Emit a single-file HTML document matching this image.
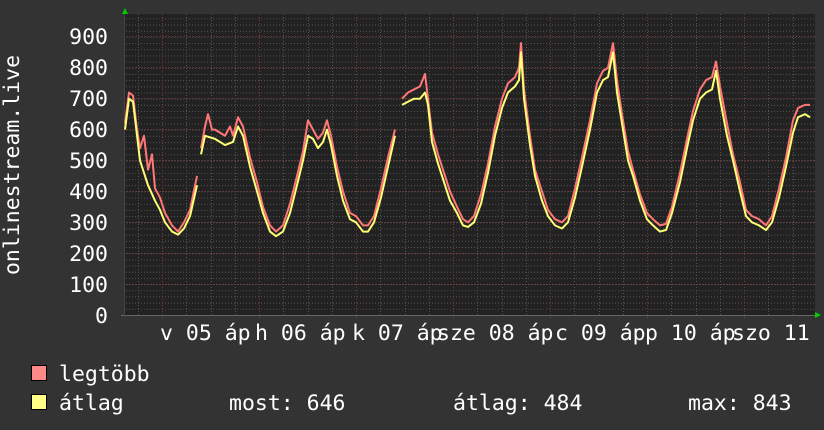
<!DOCTYPE html>
<html><head><meta charset="utf-8"><style>
html,body{margin:0;padding:0;background:#333;width:824px;height:430px;overflow:hidden}
svg{display:block}
text{font-family:"DejaVu Sans Mono","Liberation Mono",monospace;fill:#fff;font-size:21.5px}
</style></head><body>
<svg width="824" height="430" xmlns="http://www.w3.org/2000/svg">
<defs>
<pattern id="hmin" x="0" y="315" width="690" height="6.18" patternUnits="userSpaceOnUse">
<line x1="0" y1="0.5" x2="690" y2="0.5" stroke="#555" stroke-width="1" stroke-dasharray="1,2"/>
</pattern>
</defs>
<rect x="0" y="0" width="824" height="430" fill="#333"/>
<rect x="124" y="14" width="691" height="301" fill="#222"/>
<rect x="124" y="14" width="691" height="301" fill="url(#hmin)"/>
<g stroke="#555" stroke-width="1" stroke-dasharray="1,2">
<line x1="138.5" y1="14" x2="138.5" y2="315"/>
<line x1="186.5" y1="14" x2="186.5" y2="315"/><line x1="211.5" y1="14" x2="211.5" y2="315"/><line x1="235.5" y1="14" x2="235.5" y2="315"/>
<line x1="283.5" y1="14" x2="283.5" y2="315"/><line x1="308.5" y1="14" x2="308.5" y2="315"/><line x1="332.5" y1="14" x2="332.5" y2="315"/>
<line x1="380.5" y1="14" x2="380.5" y2="315"/><line x1="405.5" y1="14" x2="405.5" y2="315"/><line x1="429.5" y1="14" x2="429.5" y2="315"/>
<line x1="477.5" y1="14" x2="477.5" y2="315"/><line x1="502.5" y1="14" x2="502.5" y2="315"/><line x1="526.5" y1="14" x2="526.5" y2="315"/>
<line x1="574.5" y1="14" x2="574.5" y2="315"/><line x1="599.5" y1="14" x2="599.5" y2="315"/><line x1="623.5" y1="14" x2="623.5" y2="315"/>
<line x1="671.5" y1="14" x2="671.5" y2="315"/><line x1="696.5" y1="14" x2="696.5" y2="315"/><line x1="720.5" y1="14" x2="720.5" y2="315"/>
<line x1="768.5" y1="14" x2="768.5" y2="315"/><line x1="793.5" y1="14" x2="793.5" y2="315"/>
</g>
<g stroke="#7a3a3a" stroke-width="1" stroke-dasharray="1,2">
<line x1="162.5" y1="14" x2="162.5" y2="318"/><line x1="259.5" y1="14" x2="259.5" y2="318"/><line x1="356.5" y1="14" x2="356.5" y2="318"/>
<line x1="453.5" y1="14" x2="453.5" y2="318"/><line x1="550.5" y1="14" x2="550.5" y2="318"/><line x1="647.5" y1="14" x2="647.5" y2="318"/><line x1="744.5" y1="14" x2="744.5" y2="318"/>
<line x1="121" y1="36.5" x2="815" y2="36.5"/><line x1="121" y1="67.5" x2="815" y2="67.5"/><line x1="121" y1="98.5" x2="815" y2="98.5"/>
<line x1="121" y1="129.5" x2="815" y2="129.5"/><line x1="121" y1="160.5" x2="815" y2="160.5"/><line x1="121" y1="191.5" x2="815" y2="191.5"/>
<line x1="121" y1="222.5" x2="815" y2="222.5"/><line x1="121" y1="253.5" x2="815" y2="253.5"/><line x1="121" y1="284.5" x2="815" y2="284.5"/>
</g>
<line x1="121" y1="315.5" x2="818" y2="315.5" stroke="#666"/>
<line x1="124.5" y1="12" x2="124.5" y2="318" stroke="#444"/>
<polygon points="122,14 128,14 125,8" fill="#0c0"/>
<polygon points="815,312 815,318 821,315" fill="#0c0"/>
<g transform="translate(0,315) scale(1,-0.309)" fill="none" stroke-linejoin="round">
<g stroke="#f77" stroke-width="2">
<polyline vector-effect="non-scaling-stroke" points="125,620 129,720 133,710 137,600 140,540 144,580 148,470 152,520 155,410 160,380 165,330 172,290 178,270 184,300 190,340 197,450"/>
<polyline vector-effect="non-scaling-stroke" points="201,540 205,610 208,650 212,600 215,600 225,580 230,610 233,580 238,640 243,610 250,510 257,430 263,350 270,290 276,270 283,290 290,360 297,450 303,530 308,630 313,600 318,570 323,590 327,630 331,580 337,480 343,400 350,330 356,320 363,290 368,290 374,320 381,410 388,510 395,600"/>
<polyline vector-effect="non-scaling-stroke" points="402,700 408,720 414,730 420,740 425,780 428,700 432,590 438,520 444,460 450,400 457,350 463,310 468,300 474,320 481,390 488,490 495,610 502,700 508,750 515,770 519,800 521,880 524,730 530,580 535,470 542,400 548,340 555,310 562,300 568,320 575,410 582,510 590,630 597,750 603,790 608,800 613,880 617,760 622,650 628,530 633,470 640,390 647,330 653,310 660,290 666,295 672,350 680,460 687,570 693,660 700,730 706,760 712,770 716,820 720,740 727,620 733,520 740,430 746,340 752,320 759,310 766,290 772,320 779,410 786,510 793,630 798,670 805,680 810,680"/>
</g>
<g stroke="#ff7" stroke-width="2">
<polyline vector-effect="non-scaling-stroke" points="125,600 129,700 133,690 140,500 148,420 155,370 160,340 165,300 172,270 178,260 184,280 190,320 197,420"/>
<polyline vector-effect="non-scaling-stroke" points="201,520 205,580 215,570 225,550 233,560 238,610 243,580 250,480 257,400 263,330 270,270 276,255 283,270 290,330 297,420 303,500 308,580 313,570 318,540 323,560 327,600 331,550 337,450 343,370 350,310 356,300 363,270 368,270 374,300 381,380 388,480 395,580"/>
<polyline vector-effect="non-scaling-stroke" points="402,680 408,690 414,700 420,700 425,720 428,680 432,560 438,490 444,430 450,370 457,330 463,290 468,285 474,300 481,360 488,460 495,580 502,670 508,720 515,740 519,760 521,850 524,700 530,550 535,450 542,370 548,320 555,290 562,280 568,300 575,380 582,480 590,600 597,720 603,760 608,770 613,850 617,720 622,620 628,500 633,450 640,370 647,310 653,290 660,270 666,275 672,330 680,430 687,540 693,630 700,700 706,720 712,730 716,790 720,700 727,580 733,500 740,400 746,320 752,300 759,290 766,275 772,300 779,380 786,480 793,590 798,640 805,650 810,640"/>
</g>
</g>
<g text-anchor="end">
<text x="108" y="44">900</text><text x="108" y="75">800</text><text x="108" y="106">700</text>
<text x="108" y="137">600</text><text x="108" y="168">500</text><text x="108" y="199">400</text>
<text x="108" y="230">300</text><text x="108" y="261">200</text><text x="108" y="292">100</text><text x="108" y="323">0</text>
</g>
<text transform="translate(19,165) rotate(-90)" text-anchor="middle">onlinestream.live</text>
<text x="160" y="340">v 05 áp</text><text x="255" y="340">h 06 áp</text><text x="352" y="340">k 07 áp</text>
<text x="437" y="340">sze 08 áp</text><text x="555" y="340">c 09 áp</text><text x="645" y="340">p 10 áp</text>
<text x="732" y="340">szo 11</text>
<rect x="31.5" y="365.5" width="15" height="15" fill="#f88" stroke="#000"/>
<rect x="31.5" y="394.5" width="15" height="15" fill="#ff8" stroke="#000"/>
<text x="59" y="381">legtöbb</text>
<text x="59" y="410">átlag</text>
<text x="229" y="410">most: 646</text>
<text x="453" y="410">átlag: 484</text>
<text x="688" y="410">max: 843</text>
</svg>
</body></html>
